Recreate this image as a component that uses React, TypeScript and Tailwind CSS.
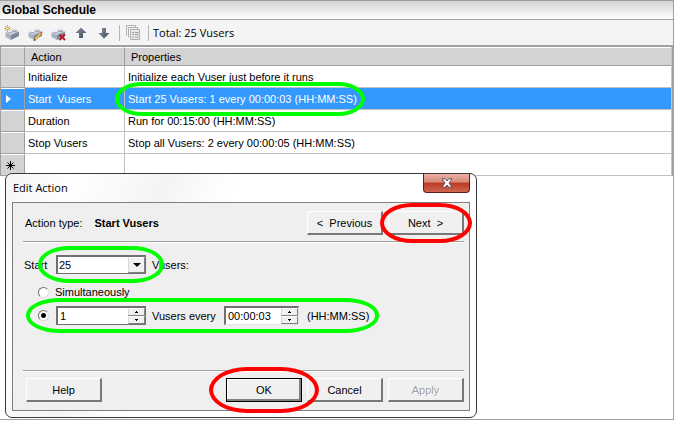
import type { ReactNode } from "react";

const RULE = "border-[#a0a0a0]";

function Cube({ children }: { children?: ReactNode }) {
  return (
    <svg width="16" height="16" viewBox="0 0 16 16" aria-hidden="true">
      <path d="M1.500 7.500 10 4l5 2.500L7 10z" fill="#c9d0da" />
      <path d="M1.500 7.500 7 10v5L1.500 12z" fill="#a9b2c0" />
      <path d="M7 10l8-3.500v4.500L7 15z" fill="#7d889a" />
      <path d="M3.500 6v1.400a2 1.100 0 0 0 4 0V6z" fill="#a3adbb" />
      <ellipse cx="5.500" cy="6" rx="2" ry="1.200" fill="#eef1f6" />
      <path d="M8.500 4.500v1.400a2 1.100 0 0 0 4 0V4.500z" fill="#8b96a7" />
      <ellipse cx="10.500" cy="4.500" rx="2" ry="1.200" fill="#e2e7ee" />
      {children}
    </svg>
  );
}

function ToolButton({ label, children }: { label: string; children: ReactNode }) {
  return (
    <button type="button" aria-label={label} className="flex size-4 items-center justify-center">
      {children}
    </button>
  );
}

function Arrow({ down }: { down?: boolean }) {
  return (
    <svg width="14" height="14" viewBox="0 0 14 14" aria-hidden="true">
      <defs>
        <linearGradient id="steel" x1="0" y1="0" x2="1" y2="1">
          <stop offset="0" stopColor="#8a94a3" />
          <stop offset="1" stopColor="#3f4856" />
        </linearGradient>
      </defs>
      <path
        d={down ? "M5 2h4v5h3.500L7 12.500 1.500 7H5z" : "M5 12h4V7h3.500L7 1.500 1.500 7H5z"}
        fill="url(#steel)"
      />
    </svg>
  );
}

function Toolbar() {
  return (
    <div className={`flex h-[27px] items-center border-b-2 bg-[#f4f4f4] pl-1 ${RULE}`}>
      <div className="flex items-center gap-[7px]">
        <ToolButton label="Add action">
          <Cube>
            <path d="M3.500 0v7M0 3.500h7M1 1l5 5M6 1 1 6" stroke="#c9a24a" strokeWidth=".9" />
            <circle cx="3.500" cy="3.500" r="1" fill="#fff3c0" />
          </Cube>
        </ToolButton>
        <ToolButton label="Edit action">
          <Cube>
            <path d="M8 14.500 14 8" stroke="#e0952c" strokeWidth="2.400" />
            <path d="M8 14.500 14 8" stroke="#ffe28a" strokeWidth="1" />
            <path d="M13.500 8.500 15 6.900" stroke="#c76a5a" strokeWidth="2.200" />
            <path d="M6.600 16l.6-2.400 1.800 1.700z" fill="#444" />
          </Cube>
        </ToolButton>
        <ToolButton label="Delete action">
          <Cube>
            <path d="M9.500 9.500l5.500 5.500M15 9.500 9.500 15" stroke="#b5172b" strokeWidth="2" />
          </Cube>
        </ToolButton>
        <ToolButton label="Move up">
          <Arrow />
        </ToolButton>
        <ToolButton label="Move down">
          <Arrow down />
        </ToolButton>
      </div>
      <div className="ml-[7px] flex h-4 items-center border-l border-[#b5b5b5] pl-[5px]">
        <ToolButton label="Show schedule">
          <svg width="15" height="15" viewBox="0 0 15 15" fill="none" stroke="#b0b0b0" aria-hidden="true">
            <path d="M.5 10.500V.5h9v2M2.500 12.500v-10h9v2" />
            <path d="M4.500 4.500h9v10h-9z" fill="#e9e9e9" />
            <path d="M6 7.500h2M9 7.500h3.500M6 9.500h2M9 9.500h3.500M6 12h2M9 12h3.500" stroke="#999" />
          </svg>
        </ToolButton>
      </div>
      <p className="ml-[7px] flex h-4 items-center border-l border-[#b5b5b5] pl-1 font-['Open_Sans',sans-serif] text-[11px]">
        Total: 25 Vusers
      </p>
    </div>
  );
}

const rows = [
  { action: "Initialize", properties: "Initialize each Vuser just before it runs" },
  { action: "Start  Vusers", properties: "Start 25 Vusers: 1 every 00:00:03 (HH:MM:SS)", selected: true },
  { action: "Duration", properties: "Run for 00:15:00 (HH:MM:SS)" },
  { action: "Stop Vusers", properties: "Stop all Vusers: 2 every 00:00:05 (HH:MM:SS)" },
];

function ScheduleTable() {
  return (
    <div className={`border-r border-l ${RULE}`}>
      <table className="w-full table-fixed border-separate border-spacing-0 border-r border-[#c4c4c4] text-left">
        <colgroup>
          <col className="w-6" />
          <col className="w-[100px]" />
          <col />
        </colgroup>
        <thead>
          <tr className="h-[19px] bg-[#d3d3d3]">
            <td className={`border-t border-r border-b border-t-white ${RULE}`} />
            <th className={`border-t border-r border-b border-t-white pl-1.5 font-normal ${RULE}`}>Action</th>
            <th className={`border-t border-b border-t-white pl-1.5 font-normal ${RULE}`}>Properties</th>
          </tr>
        </thead>
        <tbody>
          {rows.map((row) => (
            <tr key={row.action} className={row.selected ? "h-[22px] bg-[#3399ff] text-white" : "h-[22px]"}>
              <td
                className={`border-t border-r border-b border-t-white pl-[5px] ${RULE} ${
                  row.selected ? "bg-[#3399ff]" : "bg-[#d3d3d3]"
                }`}
              >
                {row.selected && (
                  <svg width="5" height="8" viewBox="0 0 5 8" aria-hidden="true">
                    <path d="M0 0l5 4-5 4z" fill="#fff" />
                  </svg>
                )}
              </td>
              <td className="border-r border-b border-[#c0c0c0] pl-[3px] whitespace-pre">{row.action}</td>
              <td className="border-b border-[#c0c0c0] pl-[3px]">
                <span className="relative whitespace-nowrap">
                  {row.properties}
                  {row.selected && (
                    <span className="absolute -inset-y-[11px] -right-2 -left-[13px] rounded-[28px/18px] border-4 border-[#00ff00]" />
                  )}
                </span>
              </td>
            </tr>
          ))}
          <tr className="h-[22px]">
            <td className={`border-t border-r border-b border-t-white bg-[#d3d3d3] pl-[5px] ${RULE}`}>
              <svg width="9" height="9" viewBox="0 0 9 9" stroke="#000" aria-hidden="true">
                <path d="M4.500 0v9M0 4.500h9M1.500 1.500l6 6M7.500 1.500l-6 6" />
              </svg>
            </td>
            <td className="border-r border-b border-[#c0c0c0]" />
            <td className="border-b border-[#c0c0c0]" />
          </tr>
        </tbody>
      </table>
    </div>
  );
}

type PushButtonProps = { children: ReactNode; primary?: boolean; disabled?: boolean };

function PushButton({ children, primary, disabled }: PushButtonProps) {
  return (
    <button
      type="button"
      disabled={disabled}
      className={`h-6 w-[76px] bg-[#f0f0f0] whitespace-pre ${
        primary
          ? "border border-black shadow-[inset_-2px_-2px_0_#808080,inset_1px_1px_0_#fff]"
          : "border-t border-r-2 border-b-2 border-l border-t-white border-r-[#787878] border-b-[#787878] border-l-white"
      } ${disabled ? "text-[#a0a0a0] [text-shadow:1px_1px_0_#fff]" : ""}`}
    >
      {children}
    </button>
  );
}

function Divider() {
  return <hr className="h-[2px] border-t border-b border-t-[#a0a0a0] border-b-white" />;
}

const SUNKEN = "flex h-[19px] border-t-2 border-l-2 border-r border-b border-t-[#707070] border-l-[#707070]";
const DARK_EDGE = "border-r-[#707070] border-b-[#707070] bg-white";
const LIGHT_EDGE = "border-r-[#e3e3e3] border-b-[#e3e3e3] bg-white";
const FACE = "border border-t-white border-l-[#d8d8d8] border-r-[#808080] border-b-[#808080] bg-[#f0f0f0]";

function Spinner({ label }: { label: string }) {
  return (
    <span className="flex w-[17px] shrink-0 flex-col">
      <button type="button" aria-label={`Increase ${label}`} className={`flex h-2 items-center justify-center ${FACE}`}>
        <svg width="3" height="2" viewBox="0 0 3 2" aria-hidden="true">
          <path d="M1 0h1v1h1v1H0V1h1z" />
        </svg>
      </button>
      <button type="button" aria-label={`Decrease ${label}`} className={`flex h-2 items-center justify-center ${FACE}`}>
        <svg width="3" height="2" viewBox="0 0 3 2" aria-hidden="true">
          <path d="M0 0h3v1H2v1H1V1H0z" />
        </svg>
      </button>
    </span>
  );
}

const RADIO =
  "size-[11px] appearance-none rounded-full border border-t-[#707070] border-l-[#707070] border-r-[#dcdcdc] border-b-[#dcdcdc] bg-white checked:bg-[radial-gradient(circle,#000_2px,#fff_3px)]";

function EditActionDialog() {
  return (
    <section
      role="dialog"
      aria-labelledby="dialog-title"
      className="relative -mt-[3px] mb-px ml-[5px] w-[472px] rounded-[7px] border border-[#3a3a3a] bg-white bg-[linear-gradient(115deg,#f4f4f4_0,#fff_12%,#f4f4f4_28%,#fff_40%,#fff_100%)] px-1.5 pb-1.5"
    >
      <header className="flex h-7 items-start justify-between">
        <h2 id="dialog-title" className="pl-px font-['Open_Sans',sans-serif] text-[11px] leading-7">
          Edit Action
        </h2>
        <button
          type="button"
          aria-label="Close"
          className="flex h-[19px] w-[47px] items-center justify-center rounded-b-[4px] border border-t-0 border-[#5a2018] bg-[linear-gradient(#eab0a3_0,#d98878_45%,#bd3a22_50%,#cf6650_100%)]"
        >
          <svg width="12" height="10" viewBox="0 0 12 10" aria-hidden="true">
            <path
              d="M1 .8h3.200L6 3 7.800.8H11L8 5l3 4.200H7.800L6 7 4.200 9.200H1L4 5z"
              fill="#fff"
              stroke="#4a4a5a"
              strokeWidth=".9"
            />
          </svg>
        </button>
      </header>

      <div className="border border-[#7f7f7f] bg-[#efefef] pr-[5px] pb-2 pl-2.5">
        <div className="flex items-center pt-2 pb-1.5 pl-0.5">
          <span>Action type:</span>
          <strong className="ml-3">Start Vusers</strong>
          <div className="ml-auto flex gap-[5px]">
            <PushButton>{"<  Previous"}</PushButton>
            <span className="relative">
              <PushButton>{"Next  >"}</PushButton>
              <span className="pointer-events-none absolute -inset-x-2 -inset-y-2 rounded-[32px/20px] border-4 border-[#ff0000]" />
            </span>
          </div>
        </div>
        <Divider />

        <div className="flex items-center pt-3 pl-px">
          <label htmlFor="vusers" className="w-8">
            Start
          </label>
          <div className="relative">
            <div className={`w-[90px] ${SUNKEN} ${DARK_EDGE}`}>
              <select id="vusers" className="w-full appearance-none bg-transparent pl-px">
                <option>25</option>
              </select>
              <span className={`pointer-events-none flex w-[17px] shrink-0 items-center justify-center ${FACE}`}>
                <svg width="8" height="4" viewBox="0 0 8 4" aria-hidden="true">
                  <path d="M0 0h8L4 4z" />
                </svg>
              </span>
            </div>
            <span className="pointer-events-none absolute -inset-x-[18px] -inset-y-[9px] rounded-[32px/18px] border-4 border-[#00ff00]" />
          </div>
          <span className="ml-1.5">Vusers:</span>
        </div>

        <label className="mt-2.5 flex h-4 items-center gap-1.5 pl-[15px]">
          <input type="radio" name="mode" className={RADIO} />
          Simultaneously
        </label>

        <div className="mt-1.5 flex">
          <div className="relative flex items-center pl-[15px]">
            <input type="radio" name="mode" defaultChecked aria-label="Gradually" className={RADIO} />
            <div className={`ml-[7px] w-[90px] ${SUNKEN} ${DARK_EDGE}`}>
              <input aria-label="Number of Vusers" defaultValue="1" className="w-full min-w-0 pl-0.5" />
              <Spinner label="Vusers" />
            </div>
            <label htmlFor="interval" className="ml-1.5 w-[72px] whitespace-nowrap">
              Vusers every
            </label>
            <div className={`w-[75px] ${SUNKEN} ${LIGHT_EDGE}`}>
              <input id="interval" defaultValue="00:00:03" className="w-full min-w-0 pl-0.5" />
              <Spinner label="interval" />
            </div>
            <span className="ml-2">(HH:MM:SS)</span>
            <span className="pointer-events-none absolute -inset-y-2 -right-2.5 left-[3px] rounded-[34px/17px] border-4 border-[#00ff00]" />
          </div>
        </div>

        <div className="pt-[45px]">
          <Divider />
        </div>
        <div className="flex items-center gap-[5px] pt-1.5 pl-[3px]">
          <div className="mr-auto">
            <PushButton>Help</PushButton>
          </div>
          <span className="relative">
            <PushButton primary>OK</PushButton>
            <span className="pointer-events-none absolute -inset-x-[17px] -inset-y-[11px] z-10 rounded-[38px/23px] border-4 border-[#ff0000]" />
          </span>
          <PushButton>Cancel</PushButton>
          <PushButton disabled>Apply</PushButton>
        </div>
      </div>
    </section>
  );
}

export default function App() {
  return (
    <div className="bg-white pr-1 pb-[3px] font-['Liberation_Sans',Arial,sans-serif] text-[11px] leading-[14px] text-black">
      <main className={`border-t border-r border-b ${RULE}`}>
        <h1
          className={`h-[19px] border-b bg-linear-to-b from-[#d3d3d3] to-white pl-0.5 text-[12px] leading-[18px] font-bold ${RULE}`}
        >
          Global Schedule
        </h1>
        <Toolbar />
        <ScheduleTable />
        <EditActionDialog />
      </main>
    </div>
  );
}
